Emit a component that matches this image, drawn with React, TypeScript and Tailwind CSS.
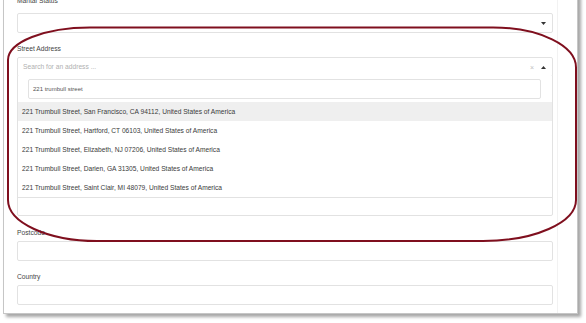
import React from "react";

const font = { fontFamily: '"Liberation Sans", Arial, sans-serif' };

function Label({ text, className = "" }: { text: string; className?: string }) {
  return (
    <div className={`h-[8px] text-[6.7px] leading-[8px] text-[#444] ${className}`}>{text}</div>
  );
}

function Box({ children, className = "" }: { children?: React.ReactNode; className?: string }) {
  return (
    <div
      className={`mt-[4px] flex h-[20px] items-center rounded-[2px] border border-[#e2e2e2] bg-white ${className}`}
    >
      {children}
    </div>
  );
}

const items = [
  "221 Trumbull Street, San Francisco, CA 94112, United States of America",
  "221 Trumbull Street, Hartford, CT 06103, United States of America",
  "221 Trumbull Street, Elizabeth, NJ 07206, United States of America",
  "221 Trumbull Street, Darien, GA 31305, United States of America",
  "221 Trumbull Street, Saint Clair, MI 48079, United States of America",
];

export default function App() {
  return (
    <div className="relative h-[323px] w-[586px] overflow-hidden bg-white" style={font}>
      <div className="ml-[3px] -mt-[10px] flex w-[575px] border border-[#c6c6c6] bg-white shadow-[3px_3px_3px_rgba(0,0,0,0.35)]">
        <div className="flex w-[553px] flex-col pl-[13px] pr-[4px] pt-[6px] pb-[8px]">
          <Label text="Marital Status" />
          <Box className="mt-[8px] justify-end pr-[6px]">
            <svg width="5" height="3" viewBox="0 0 5 3">
              <path d="M0 0 H5 L2.5 3 Z" fill="#333" />
            </svg>
          </Box>

          <div className="relative mt-[12px] flex flex-col">
            <Label text="Street Address" />
            <Box className="justify-between pl-[5px] pr-[6px]">
              <span className="text-[6.7px] text-[#b0b0b0]">Search for an address ...</span>
              <span className="flex items-center gap-[7px]">
                <span className="text-[7px] leading-none text-[#c0c0c0]">×</span>
                <svg width="5" height="3" viewBox="0 0 5 3">
                  <path d="M0 3 H5 L2.5 0 Z" fill="#333" />
                </svg>
              </span>
            </Box>
            <div className="absolute left-0 right-0 top-[31px] z-10 flex h-[122px] flex-col border border-t-0 border-[#e2e2e2] bg-white">
              <div className="ml-[10px] mr-[11px] mt-[3px] flex h-[20px] items-center rounded-[2px] border border-[#e2e2e2] pl-[4px] text-[6px] text-[#555]">
                221 trumbull street
              </div>
              <div className="mt-[3px] flex flex-col">
                {items.map((t, i) => (
                  <div
                    key={t}
                    className={`flex h-[19px] items-center pl-[4px] text-[6.65px] text-[#3a3a3a] ${
                      i === 0 ? "bg-[#efefef]" : ""
                    }`}
                  >
                    {t}
                  </div>
                ))}
              </div>
            </div>
          </div>

          <Label text="" className="mt-[13px]" />
          <Box />
          <Label text="" className="mt-[13px]" />
          <Box />
          <Label text="" className="mt-[17px]" />
          <Box />

          <Label text="Postcode" className="mt-[13px]" />
          <Box />
          <Label text="Country" className="mt-[12px]" />
          <Box />
        </div>
        <div className="flex-1 border-l border-[#f2f2f2]" />
      </div>

      <svg
        className="pointer-events-none absolute left-0 top-0 z-20"
        width="586"
        height="323"
        viewBox="0 0 586 323"
      >
        <path
          d="M 90 27.5 L 493 27.5 A 83 40 0 0 1 576 68 L 576 200 A 93 41 0 0 1 483 241 L 97 241 A 89 41 0 0 1 8 200 L 8 60 A 82 32.5 0 0 1 90 27.5 Z"
          fill="none"
          stroke="#7f0f1e"
          strokeWidth="2"
        />
      </svg>
    </div>
  );
}
